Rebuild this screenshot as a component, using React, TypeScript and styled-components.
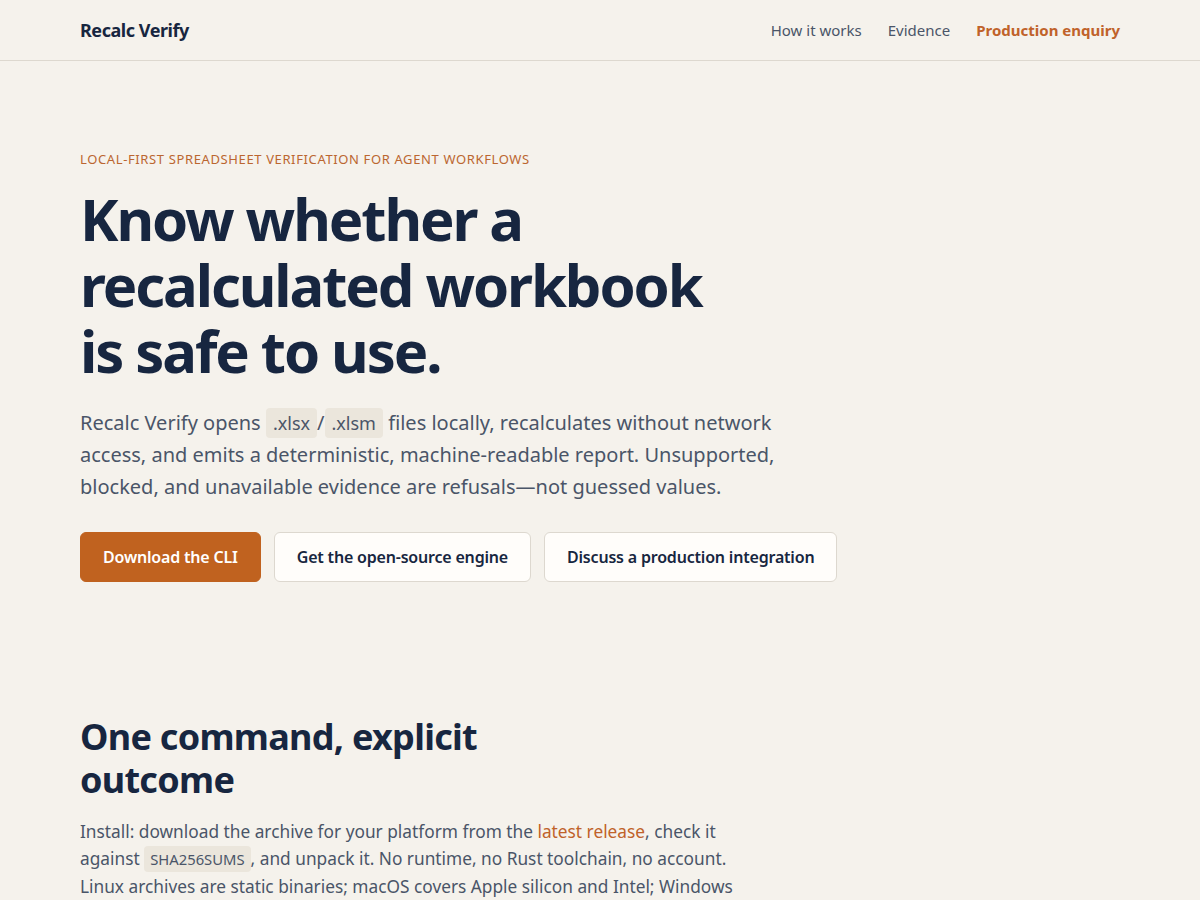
import React from "react";
import styled, { createGlobalStyle } from "styled-components";

const Global = createGlobalStyle`
  html, body { margin: 0; padding: 0; background: #f5f2ec; }
  body {
    font-family: "Noto Sans", "Open Sans", "Liberation Sans", sans-serif;
    color: #172640;
    -webkit-font-smoothing: antialiased;
  }
  * { box-sizing: border-box; }
`;

const Header = styled.header`
  height: 61px;
  border-bottom: 1px solid #ddd8cf;
`;

const HeaderInner = styled.div`
  max-width: 1040px;
  margin: 0 auto;
  height: 100%;
  display: flex;
  align-items: center;
  justify-content: space-between;
`;

const Brand = styled.a`
  font-size: 18px;
  font-weight: 700;
  color: #172640;
  text-decoration: none;
  letter-spacing: -0.025em;
`;

const Nav = styled.nav`
  display: flex;
  gap: 26px;
  align-items: center;
`;

const NavLink = styled.a<{ $accent?: boolean }>`
  font-size: 15px;
  text-decoration: none;
  color: ${(p) => (p.$accent ? "#c0622a" : "#4a5568")};
  font-weight: ${(p) => (p.$accent ? 700 : 400)};
`;

const Main = styled.main`
  max-width: 1040px;
  margin: 0 auto;
`;

const Hero = styled.section`
  padding: 89px 0 0;
`;

const Eyebrow = styled.p`
  margin: 0;
  font-size: 13px;
  line-height: 18px;
  letter-spacing: 0.048em;
  text-transform: uppercase;
  color: #bb6630;
`;

const HeroTitle = styled.h1`
  margin: 18px 0 0;
  max-width: 720px;
  font-size: 58px;
  line-height: 66px;
  font-weight: 700;
  letter-spacing: -0.036em;
  color: #172640;
`;

const Lead = styled.p`
  margin: 23px 0 0;
  max-width: 720px;
  font-size: 20px;
  line-height: 32px;
  color: #4a5568;
`;

const Code = styled.code<{ $small?: boolean }>`
  font-family: "Noto Sans", "Open Sans", sans-serif;
  font-size: ${(p) => (p.$small ? "14.8px" : "18px")};
  background: #ebe6dc;
  border-radius: 4px;
  padding: ${(p) => (p.$small ? "3px 6px" : "3px 7px")};
  color: #4a5568;
`;

const Actions = styled.div`
  margin-top: 29px;
  display: flex;
  gap: 13px;
`;

const Button = styled.a<{ $primary?: boolean }>`
  display: inline-flex;
  align-items: center;
  height: 50px;
  padding: 0 22px;
  border-radius: 6px;
  font-size: 16px;
  font-weight: 600;
  letter-spacing: -0.012em;
  text-decoration: none;
  border: 1px solid ${(p) => (p.$primary ? "#c0621f" : "#ddd8cf")};
  background: ${(p) => (p.$primary ? "#c0621f" : "#fffdfa")};
  color: ${(p) => (p.$primary ? "#ffffff" : "#172640")};
`;

const Section = styled.section`
  padding-top: 133px;
`;

const SectionTitle = styled.h2`
  margin: 0;
  max-width: 480px;
  font-size: 36px;
  line-height: 43px;
  font-weight: 700;
  letter-spacing: -0.02em;
  color: #172640;
`;

const Body = styled.p`
  margin: 17px 0 0;
  max-width: 680px;
  font-size: 17.3px;
  line-height: 27px;
  color: #4a5568;
`;

const Link = styled.a`
  color: #c0622a;
  text-decoration: none;
`;

export default function App() {
  return (
    <>
      <Global />
      <Header>
        <HeaderInner>
          <Brand href="#">Recalc Verify</Brand>
          <Nav>
            <NavLink href="#">How it works</NavLink>
            <NavLink href="#">Evidence</NavLink>
            <NavLink href="#" $accent>
              Production enquiry
            </NavLink>
          </Nav>
        </HeaderInner>
      </Header>
      <Main>
        <Hero>
          <Eyebrow>Local-first spreadsheet verification for agent workflows</Eyebrow>
          <HeroTitle>
            Know whether a recalculated workbook
            <br />
            is safe to use.
          </HeroTitle>
          <Lead>
            Recalc Verify opens <Code>.xlsx</Code>/<Code>.xlsm</Code> files locally,
            recalculates without network access, and emits a deterministic,
            machine-readable report. Unsupported, blocked, and unavailable evidence are
            refusals—not guessed values.
          </Lead>
          <Actions>
            <Button href="#" $primary>
              Download the CLI
            </Button>
            <Button href="#">Get the open-source engine</Button>
            <Button href="#">Discuss a production integration</Button>
          </Actions>
        </Hero>
        <Section>
          <SectionTitle>One command, explicit outcome</SectionTitle>
          <Body>
            Install: download the archive for your platform from the{" "}
            <Link href="#">latest release</Link>, check it against{" "}
            <Code $small>SHA256SUMS</Code>, and unpack it. No runtime, no Rust toolchain,
            no account. Linux archives are static binaries; macOS covers Apple silicon and
            Intel; Windows archives ship a single executable.
          </Body>
        </Section>
      </Main>
    </>
  );
}
